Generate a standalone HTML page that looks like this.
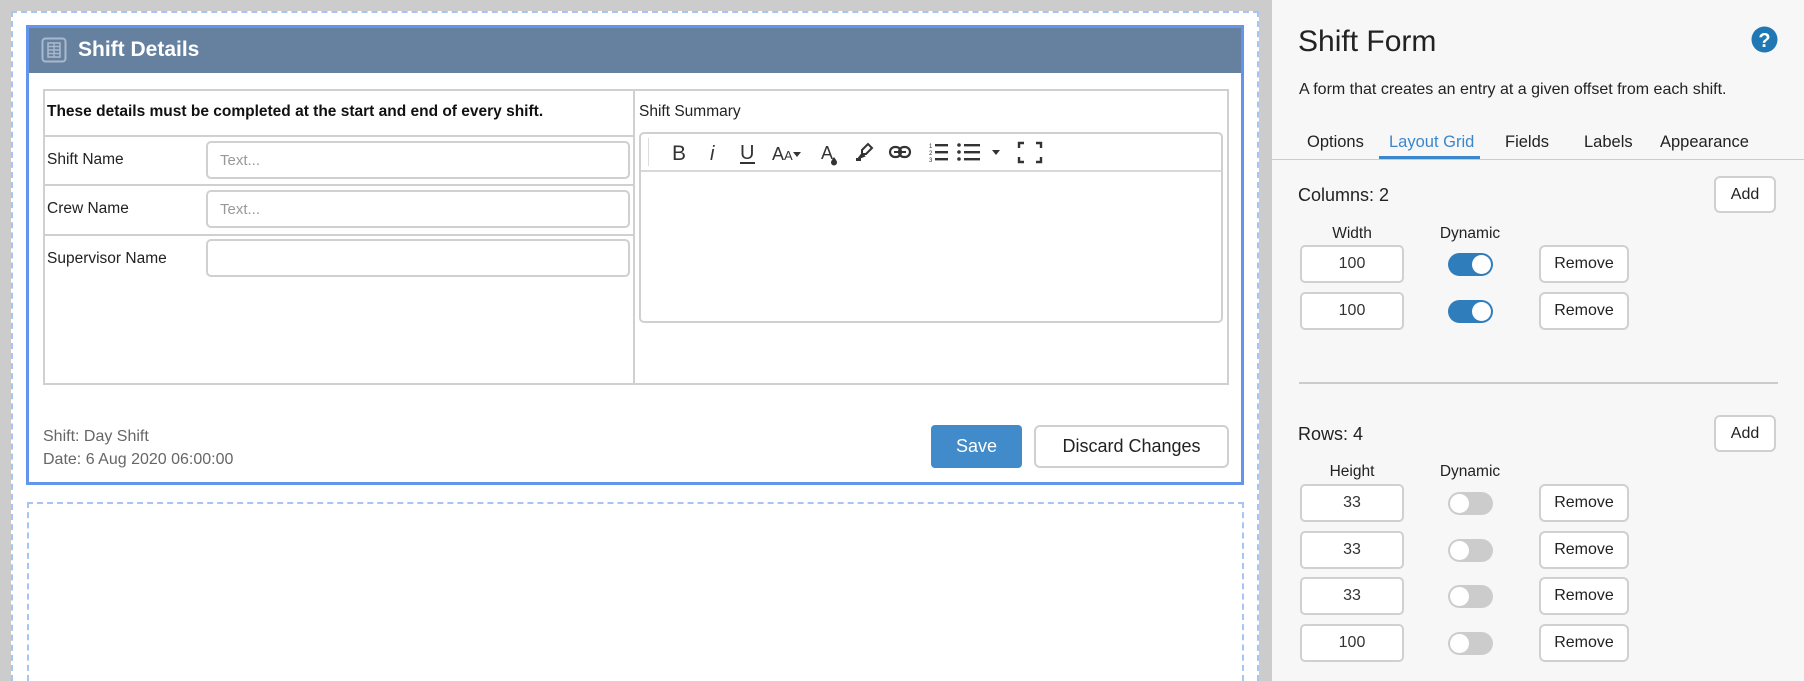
<!DOCTYPE html>
<html style="width:1804px;height:681px;overflow:hidden"><head><meta charset="utf-8"><style>
*{box-sizing:border-box;margin:0;padding:0}
body{width:1804px;height:681px;overflow:hidden;background:#cccccc;font-family:"Liberation Sans",sans-serif;position:relative;color:#222}
.a{position:absolute}
.inp{position:absolute;border:2px solid #d0d0d0;border-radius:5px;background:#fff}
.btn{position:absolute;border:2px solid #d0d0d0;border-radius:6px;background:#fff;font-size:16px;color:#222;display:flex;align-items:center;justify-content:center}
.lbl{position:absolute;font-size:15.5px;color:#222}
.tog{position:absolute;width:45px;height:23px;border-radius:12px;background:#ccc}
.tog:after{content:"";position:absolute;top:2px;left:2px;width:19px;height:19px;border-radius:50%;background:#fff}
.tog.on{background:#2f7dbb}
.tog.on:after{left:24px}
.num{display:flex;align-items:center;justify-content:center;font-size:16px;color:#333}
</style></head><body>
<div class="a" style="left:11px;top:11px;width:1248px;height:670px;background:#fff;border:2px dashed #a8c4f4;border-bottom:none"></div>
<div class="a" style="left:26px;top:25px;width:1218px;height:460px;border:3px solid #6495ed;background:#fff"></div>
<div class="a" style="left:29px;top:28px;width:1212px;height:45px;background:#66809f"></div>
<svg class="a" style="left:41px;top:37px" width="26" height="26" viewBox="0 0 26 26"><rect x="1.5" y="1.5" width="23" height="23" rx="3" fill="none" stroke="#a9b8cc" stroke-width="2"/><rect x="7" y="6" width="12" height="14" fill="none" stroke="#a9b8cc" stroke-width="1.6"/><path d="M7 9.5H19M7 13H19M7 16.5H19M13 6V20" stroke="#a9b8cc" stroke-width="1.4"/></svg>
<div class="a" style="left:78px;top:38px;font-size:21px;font-weight:bold;color:#fff">Shift Details</div>
<div class="a" style="left:43px;top:89px;width:1186px;height:296px;border:2px solid #d0d0d0"></div>
<div class="a" style="left:633px;top:89px;width:2px;height:296px;background:#d0d0d0"></div>
<div class="a" style="left:43px;top:135px;width:591px;height:2px;background:#d0d0d0"></div>
<div class="a" style="left:43px;top:184px;width:591px;height:2px;background:#d0d0d0"></div>
<div class="a" style="left:43px;top:234px;width:591px;height:2px;background:#d0d0d0"></div>
<div class="a" style="left:47px;top:103px;font-size:15.5px;font-weight:bold;color:#111">These details must be completed at the start and end of every shift.</div>
<div class="lbl" style="left:47px;top:151px">Shift Name</div>
<div class="lbl" style="left:47px;top:200px">Crew Name</div>
<div class="lbl" style="left:47px;top:250px">Supervisor Name</div>
<div class="inp" style="left:206px;top:141px;width:424px;height:38px;padding:9px 12px;font-size:15px;color:#999">Text...</div>
<div class="inp" style="left:206px;top:190px;width:424px;height:38px;padding:9px 12px;font-size:15px;color:#999">Text...</div>
<div class="inp" style="left:206px;top:239px;width:424px;height:38px"></div>
<div class="lbl" style="left:639px;top:103px">Shift Summary</div>
<div class="inp" style="left:639px;top:132px;width:584px;height:191px"></div>
<div class="a" style="left:641px;top:170px;width:580px;height:2px;background:#d8d8d8"></div>
<div class="a" style="left:648px;top:138px;width:1px;height:28px;background:#ddd"></div>
<svg class="a" style="left:660px;top:138px" width="400" height="32" viewBox="0 0 400 32" fill="#333">
<text x="12" y="22" font-family="Liberation Sans" font-size="21" fill="#333">B</text>
<text x="50" y="22" font-family="Liberation Sans" font-size="20" font-style="italic" fill="#333">i</text>
<text x="80" y="21" font-family="Liberation Sans" font-size="20" fill="#333">U</text>
<rect x="80" y="24" width="15" height="2"/>
<text x="112" y="22" font-family="Liberation Sans" font-size="18" fill="#333">A</text>
<text x="124" y="22" font-family="Liberation Sans" font-size="13" fill="#333">A</text>
<path d="M133 14h8l-4 5z"/>
<text x="161" y="21" font-family="Liberation Sans" font-size="18" fill="#333">A</text>
<path d="M174 19c2 3 3 4 3 5.5a3 3 0 0 1-6 0c0-1.5 1-2.5 3-5.5z"/>
<path d="M202 12l6-6 4 4-6 6h-4z M199 20l3-4 2 2z" fill="none" stroke="#333" stroke-width="2"/>
<rect x="196" y="20" width="5" height="3"/>
<rect x="230" y="9" width="11" height="10" rx="5" fill="none" stroke="#333" stroke-width="2.2"/>
<rect x="239" y="9" width="11" height="10" rx="5" fill="none" stroke="#333" stroke-width="2.2"/>
<rect x="234" y="13" width="12" height="2"/>
<text x="269" y="10" font-size="6" font-family="Liberation Sans">1</text><text x="269" y="17" font-size="6" font-family="Liberation Sans">2</text><text x="269" y="24" font-size="6" font-family="Liberation Sans">3</text>
<rect x="275" y="6" width="13" height="2.4"/><rect x="275" y="13" width="13" height="2.4"/><rect x="275" y="20" width="13" height="2.4"/>
<circle cx="299" cy="7" r="1.8"/><circle cx="299" cy="14" r="1.8"/><circle cx="299" cy="21" r="1.8"/>
<rect x="304" y="6" width="16" height="2.4"/><rect x="304" y="13" width="16" height="2.4"/><rect x="304" y="20" width="16" height="2.4"/>
<path d="M332 12h8l-4 5z"/>
<path d="M359 10V5h5M376 5h5v5M381 19v5h-5M364 24h-5v-5" fill="none" stroke="#333" stroke-width="2.4"/>
</svg>
<div class="a" style="left:43px;top:425px;font-size:16px;color:#666;line-height:23px">Shift: Day Shift<br>Date: 6 Aug 2020 06:00:00</div>
<div class="a" style="left:931px;top:425px;width:91px;height:43px;background:#418bca;border-radius:4px;color:#fff;font-size:18px;display:flex;align-items:center;justify-content:center">Save</div>
<div class="btn" style="left:1034px;top:425px;width:195px;height:43px;font-size:18px">Discard Changes</div>
<div class="a" style="left:27px;top:502px;width:1217px;height:179px;border:2px dashed #a8c4f4;border-bottom:none"></div>
<div class="a" style="left:1272px;top:0;width:532px;height:681px;background:#f7f7f7"></div>
<div class="a" style="left:1298px;top:25px;font-size:30px;color:#222">Shift Form</div>
<svg class="a" style="left:1751px;top:26px" width="27" height="27" viewBox="0 0 27 27"><circle cx="13.5" cy="13.5" r="13" fill="#1f78b4"/><text x="13.5" y="21" text-anchor="middle" font-family="Liberation Sans" font-weight="bold" font-size="20" fill="#fff">?</text></svg>
<div class="a" style="left:1299px;top:81px;font-size:16px;color:#222">A form that creates an entry at a given offset from each shift.</div>
<div class="lbl" style="left:1307px;top:133px;font-size:16.5px">Options</div>
<div class="lbl" style="left:1389px;top:133px;font-size:16.5px;color:#3b87cc">Layout Grid</div>
<div class="lbl" style="left:1505px;top:133px;font-size:16.5px">Fields</div>
<div class="lbl" style="left:1584px;top:133px;font-size:16.5px">Labels</div>
<div class="lbl" style="left:1660px;top:133px;font-size:16.5px">Appearance</div>
<div class="a" style="left:1272px;top:159px;width:532px;height:1px;background:#ccc"></div>
<div class="a" style="left:1379px;top:156px;width:101px;height:3px;background:#3b87cc"></div>
<div class="lbl" style="left:1298px;top:185px;font-size:18px">Columns: 2</div>
<div class="btn" style="left:1714px;top:176px;width:62px;height:37px">Add</div>
<div class="lbl" style="left:1300px;top:225px;width:104px;text-align:center">Width</div>
<div class="lbl" style="left:1420px;top:225px;width:100px;text-align:center">Dynamic</div>
<div class="inp num" style="left:1300px;top:245px;width:104px;height:38px">100</div>
<div class="tog on" style="left:1448px;top:253px"></div>
<div class="btn" style="left:1539px;top:245px;width:90px;height:38px">Remove</div>
<div class="inp num" style="left:1300px;top:292px;width:104px;height:38px">100</div>
<div class="tog on" style="left:1448px;top:300px"></div>
<div class="btn" style="left:1539px;top:292px;width:90px;height:38px">Remove</div>
<div class="a" style="left:1299px;top:382px;width:479px;height:2px;background:#ccc"></div>
<div class="lbl" style="left:1298px;top:424px;font-size:18px">Rows: 4</div>
<div class="btn" style="left:1714px;top:415px;width:62px;height:37px">Add</div>
<div class="lbl" style="left:1300px;top:463px;width:104px;text-align:center">Height</div>
<div class="lbl" style="left:1420px;top:463px;width:100px;text-align:center">Dynamic</div>
<div class="inp num" style="left:1300px;top:484px;width:104px;height:38px">33</div>
<div class="tog" style="left:1448px;top:492px"></div>
<div class="btn" style="left:1539px;top:484px;width:90px;height:38px">Remove</div>
<div class="inp num" style="left:1300px;top:531px;width:104px;height:38px">33</div>
<div class="tog" style="left:1448px;top:539px"></div>
<div class="btn" style="left:1539px;top:531px;width:90px;height:38px">Remove</div>
<div class="inp num" style="left:1300px;top:577px;width:104px;height:38px">33</div>
<div class="tog" style="left:1448px;top:585px"></div>
<div class="btn" style="left:1539px;top:577px;width:90px;height:38px">Remove</div>
<div class="inp num" style="left:1300px;top:624px;width:104px;height:38px">100</div>
<div class="tog" style="left:1448px;top:632px"></div>
<div class="btn" style="left:1539px;top:624px;width:90px;height:38px">Remove</div>
</body></html>
